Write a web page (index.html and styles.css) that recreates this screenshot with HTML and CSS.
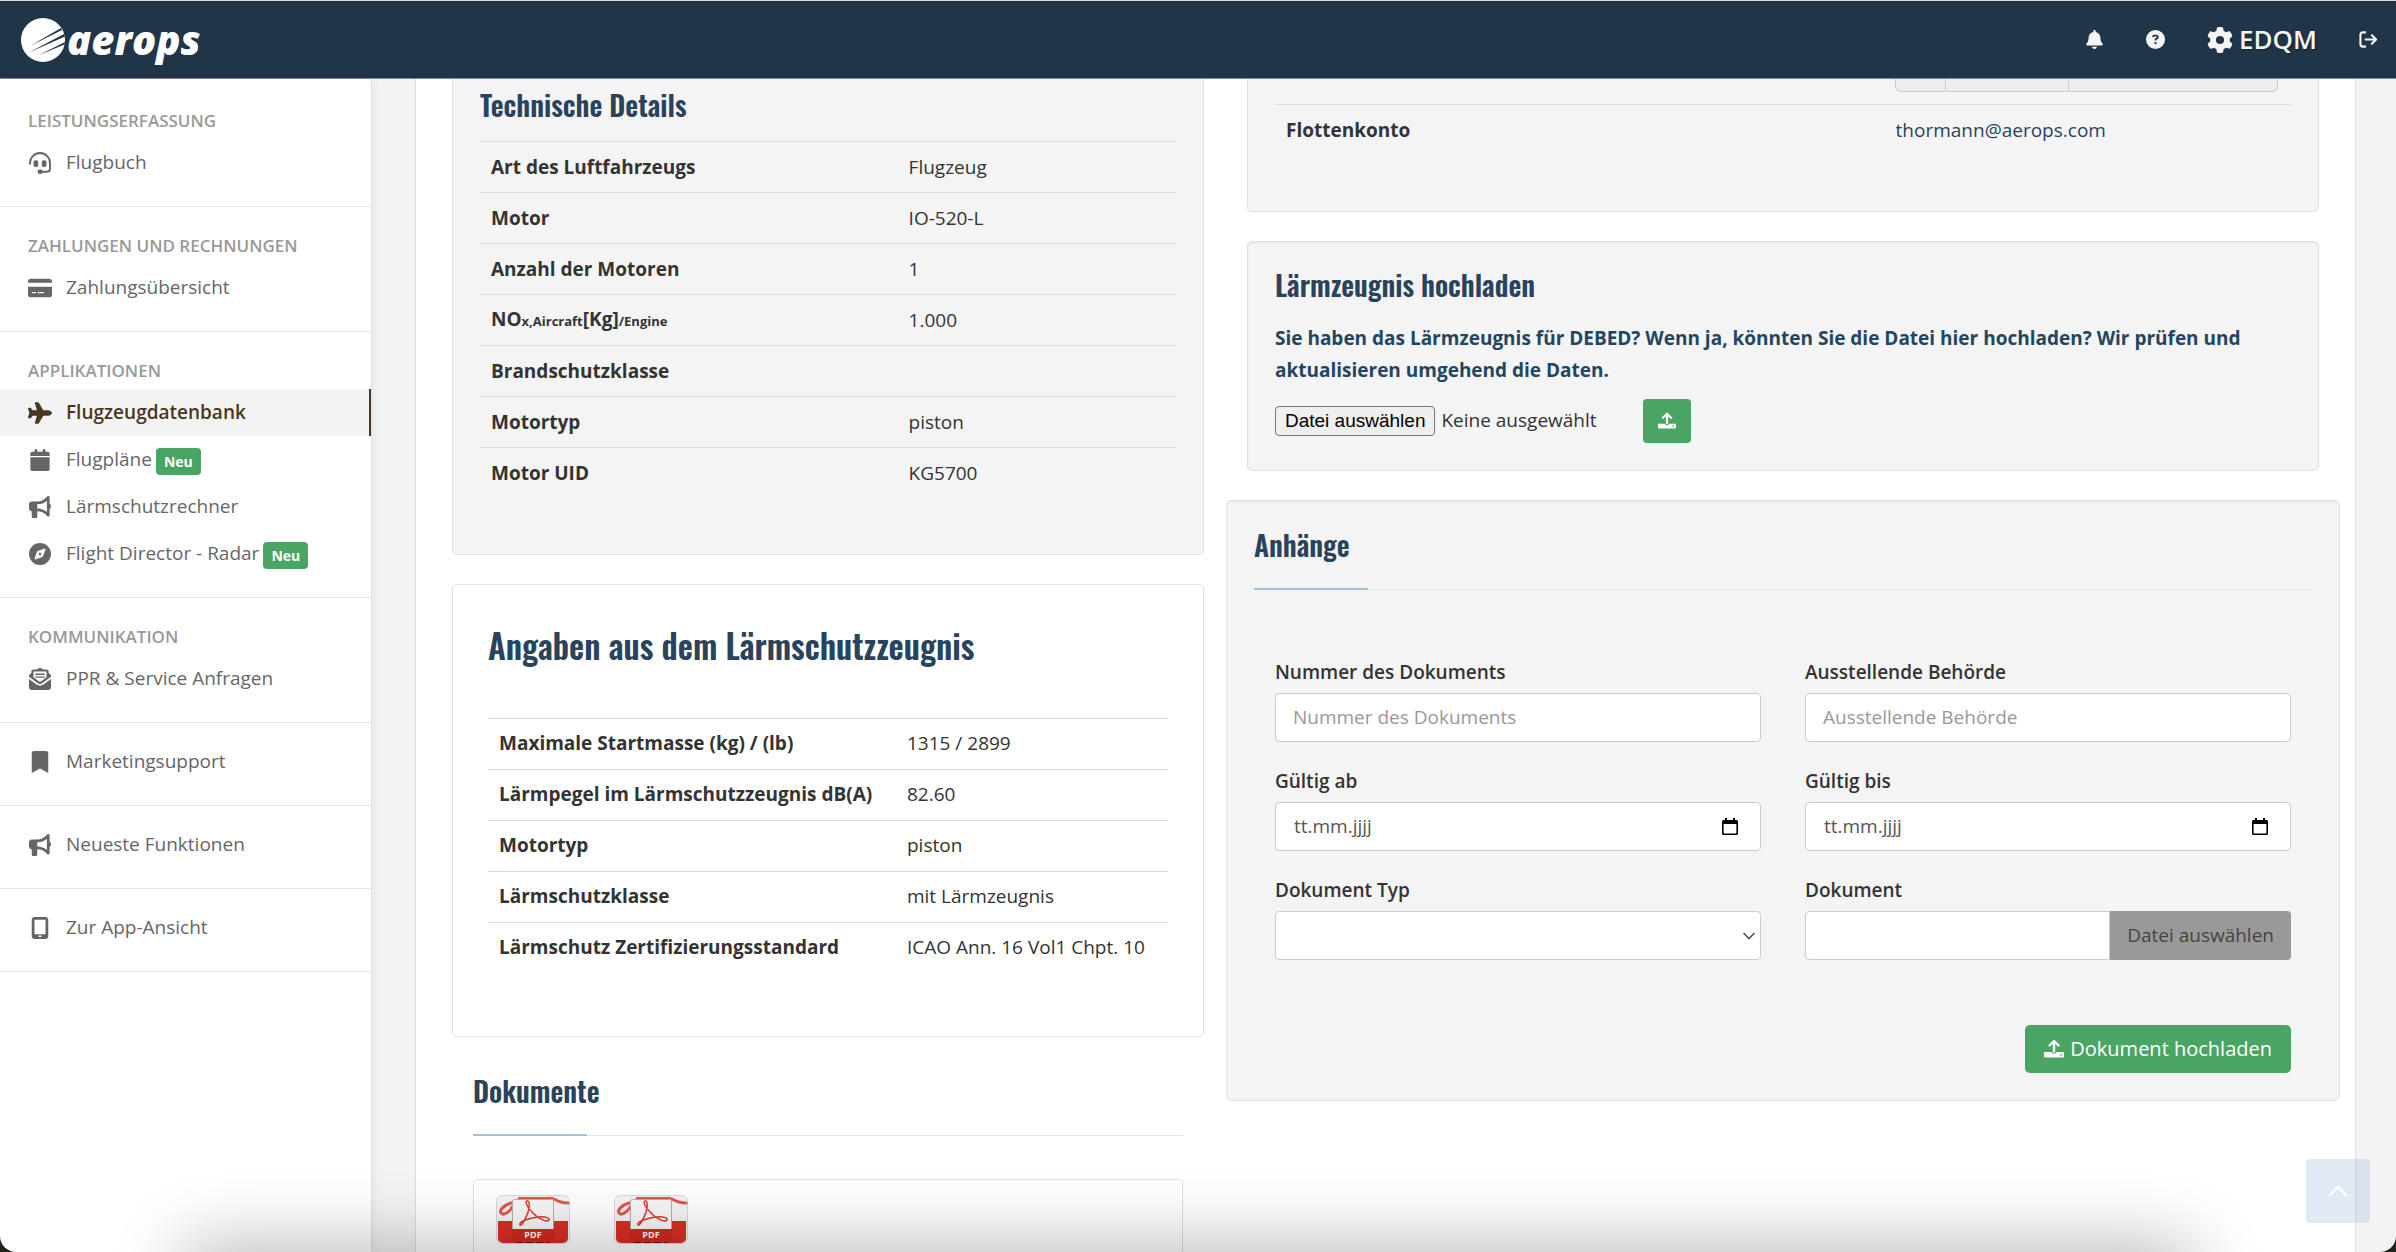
FILE: index.html
```html
<!DOCTYPE html>
<html lang="de">
<head>
<meta charset="utf-8">
<meta name="viewport" content="width=device-width, initial-scale=1">
<title>aerops – Flugzeugdatenbank</title>
<link rel="stylesheet" href="styles.css">
</head>
<body>
<svg class="sprite" aria-hidden="true">
  <symbol id="i-headset" viewBox="0 0 512 512"><path d="M24 272v-24C24 128 128 24 256 24s232 104 232 224v140c0 44-30 72-72 72H290" fill="none" stroke="currentColor" stroke-width="44" stroke-linecap="round"/><rect x="106" y="190" width="108" height="158" rx="42"/><rect x="298" y="190" width="108" height="158" rx="42"/><rect x="200" y="410" width="120" height="100" rx="48"/></symbol>
  <symbol id="i-card" viewBox="0 0 576 512"><path d="M64 32C28.700 32 0 60.700 0 96v32h576V96c0-35.300-28.700-64-64-64H64zm512 192H0v192c0 35.300 28.700 64 64 64h448c35.300 0 64-28.700 64-64V224zM112 352h64c8.800 0 16 7.200 16 16s-7.200 16-16 16h-64c-8.800 0-16-7.200-16-16s7.200-16 16-16zm112 16c0-8.800 7.200-16 16-16h128c8.800 0 16 7.200 16 16s-7.200 16-16 16H240c-8.800 0-16-7.200-16-16z"/></symbol>
  <symbol id="i-plane" viewBox="0 0 576 512"><path d="M482.300 192c34.200 0 93.700 29 93.700 64c0 36-59.500 64-93.700 64l-116.600 0L265.200 495.900c-5.700 10-16.300 16.100-27.800 16.100l-56.200 0c-10.600 0-18.300-10.200-15.400-20.400l49-171.600L112 320 68.800 377.600c-3 4-7.800 6.400-12.800 6.400l-42 0c-7.800 0-14-6.300-14-14c0-1.300 .2-2.600 .5-3.900L32 256 .5 145.900c-.4-1.300-.5-2.600-.5-3.900c0-7.800 6.300-14 14-14l42 0c5 0 9.800 2.400 12.800 6.400L112 192l102.900 0-49-171.600C162.900 10.200 170.600 0 181.200 0l56.200 0c11.500 0 22.100 6.200 27.800 16.100L365.700 192l116.600 0z"/></symbol>
  <symbol id="i-calendar" viewBox="0 0 448 512"><path d="M96 32V64H48C21.500 64 0 85.500 0 112v48H448V112c0-26.500-21.500-48-48-48H352V32c0-17.700-14.300-32-32-32s-32 14.300-32 32V64H160V32c0-17.700-14.300-32-32-32S96 14.300 96 32zM448 192H0V464c0 26.500 21.500 48 48 48H400c26.500 0 48-21.500 48-48V192z"/></symbol>
  <symbol id="i-horn" viewBox="0 0 512 512"><path d="M480 32c0-12.900-7.800-24.600-19.800-29.600s-25.700-2.200-34.900 6.900L381.700 53c-48 48-113.100 75-181 75H192 160 64c-35.300 0-64 28.700-64 64v96c0 35.300 28.700 64 64 64l0 128c0 17.700 14.300 32 32 32h64c17.700 0 32-14.300 32-32V352l8.700 0c67.900 0 133 27 181 75l43.600 43.600c9.200 9.200 22.900 11.900 34.900 6.900s19.800-16.600 19.800-29.600V300.400c18.600-8.800 32-32.500 32-60.400s-13.400-51.600-32-60.400V32zm-64 76.700V240 371.300C357.200 317.800 280.500 288 200.700 288H192V192h8.700c79.800 0 156.500-29.800 215.300-83.300z"/></symbol>
  <symbol id="i-compass" viewBox="0 0 512 512"><path d="M256 512A256 256 0 1 0 256 0a256 256 0 1 0 0 512zm50.700-186.900L162.400 380.600c-19.400 7.500-38.500-11.600-31-31l55.500-144.300c3.300-8.500 9.900-15.100 18.400-18.400l144.300-55.500c19.400-7.500 38.500 11.600 31 31L325.100 306.700c-3.200 8.500-9.900 15.100-18.400 18.400zM288 256a32 32 0 1 0 -64 0 32 32 0 1 0 64 0z"/></symbol>
  <symbol id="i-mail" viewBox="0 0 512 512"><path d="M256 0c-22 0-43 7-61 20L171 36H96C74 36 56 54 56 76v42L20 144C8 153 0 168 0 184v22l196 145c36 26 84 26 120 0l196-145v-22c0-16-8-31-20-40l-36-26V76c0-22-18-40-40-40h-75l-24-16C299 7 278 0 256 0zM104 84h304v134L286 308c-18 13-42 13-60 0L104 218zM160 130c-22 0-22 32 0 32h192c22 0 22-32 0-32zm0 66c-22 0-22 32 0 32h192c22 0 22-32 0-32zM0 256v192c0 35 29 64 64 64h384c35 0 64-29 64-64V256L344 380c-52 38-124 38-176 0z" fill-rule="evenodd"/></symbol>
  <symbol id="i-bookmark" viewBox="0 0 384 512"><path d="M0 512V48C0 21 21 0 48 0h288c27 0 48 21 48 48v464L192 408z"/></symbol>
  <symbol id="i-tablet" viewBox="0 0 384 512"><path d="M64 0C29 0 0 29 0 64v384c0 35 29 64 64 64h256c35 0 64-29 64-64V64c0-35-29-64-64-64zM64 64h256v336H64zM160 432h64v32h-64z" fill-rule="evenodd"/></symbol>
  <symbol id="i-bell" viewBox="0 0 448 512"><path d="M224 0c-17.700 0-32 14.300-32 32V51.200C119 66 64 130.600 64 208v18.800c0 47-17.300 92.400-48.500 127.600l-7.400 8.300c-8.400 9.400-10.400 22.900-5.300 34.400S19.400 416 32 416H416c12.600 0 24-7.400 29.200-18.900s3.100-25-5.300-34.400l-7.400-8.300C401.300 319.200 384 273.900 384 226.800V208c0-77.400-55-142-128-156.800V32c0-17.700-14.300-32-32-32zm45.300 493.300c12-12 18.700-28.300 18.700-45.300H224 160c0 17 6.700 33.300 18.700 45.300s28.300 18.700 45.300 18.700s33.300-6.700 45.300-18.700z"/></symbol>
  <symbol id="i-help" viewBox="0 0 512 512"><path d="M256 512A256 256 0 1 0 256 0a256 256 0 1 0 0 512zM169.800 165.300c7.900-22.300 29.100-37.300 52.800-37.300h58.300c34.900 0 63.100 28.300 63.100 63.100c0 22.600-12.100 43.500-31.700 54.800L280 264.400c-.2 13-10.900 23.600-24 23.600c-13.300 0-24-10.700-24-24V250.500c0-8.600 4.600-16.500 12.100-20.800l44.300-25.400c4.700-2.700 7.600-7.700 7.600-13.100c0-8.400-6.800-15.100-15.100-15.100H222.600c-3.400 0-6.400 2.100-7.500 5.300l-.4 1.200c-4.400 12.500-18.200 19-30.600 14.600s-19-18.200-14.600-30.600l.4-1.200zM224 352a32 32 0 1 1 64 0 32 32 0 1 1 -64 0z"/></symbol>
  <symbol id="i-gear" viewBox="0 0 512 512"><path d="M495.900 166.600c3.200 8.700 .5 18.400-6.400 24.600l-43.300 39.400c1.100 8.300 1.700 16.800 1.700 25.400s-.6 17.100-1.700 25.400l43.300 39.400c6.900 6.200 9.600 15.900 6.400 24.600c-4.400 11.900-9.700 23.300-15.800 34.300l-4.700 8.100c-6.600 11-14 21.400-22.100 31.200c-5.900 7.200-15.700 9.600-24.500 6.800l-55.700-17.700c-13.400 10.300-28.200 18.900-44 25.400l-12.500 57.100c-2 9.100-9 16.300-18.200 17.800c-13.800 2.300-28 3.500-42.500 3.500s-28.700-1.200-42.500-3.500c-9.200-1.500-16.200-8.700-18.200-17.800l-12.500-57.100c-15.800-6.500-30.600-15.100-44-25.400L83.100 425.900c-8.800 2.800-18.600 .3-24.500-6.800c-8.100-9.800-15.500-20.200-22.100-31.200l-4.700-8.100c-6.100-11-11.400-22.400-15.800-34.300c-3.200-8.700-.5-18.400 6.400-24.600l43.300-39.400C64.600 273.100 64 264.600 64 256s.6-17.100 1.700-25.400L22.400 191.200c-6.900-6.200-9.600-15.900-6.400-24.600c4.400-11.900 9.700-23.300 15.800-34.300l4.700-8.100c6.600-11 14-21.400 22.100-31.200c5.900-7.200 15.700-9.600 24.500-6.800l55.700 17.700c13.400-10.300 28.200-18.900 44-25.400l12.500-57.100c2-9.100 9-16.300 18.200-17.800C227.300 1.200 241.500 0 256 0s28.700 1.200 42.500 3.500c9.200 1.500 16.200 8.700 18.200 17.800l12.500 57.100c15.800 6.500 30.600 15.100 44 25.400l55.700-17.700c8.800-2.800 18.600-.3 24.500 6.800c8.100 9.800 15.500 20.200 22.100 31.200l4.700 8.100c6.100 11 11.400 22.400 15.800 34.300zM256 336a80 80 0 1 0 0-160 80 80 0 1 0 0 160z"/></symbol>
  <symbol id="i-logout" viewBox="0 0 20 18"><path d="M6.500 1.500H4A2.500 2.500 0 0 0 1.500 4v10A2.500 2.500 0 0 0 4 16.500h2.500M7 9h11M13.500 4.500 18 9l-4.500 4.500" fill="none" stroke="currentColor" stroke-width="2.200" stroke-linecap="round" stroke-linejoin="round"/></symbol>
  <symbol id="i-upload" viewBox="0 0 20 18"><path d="M10 12V2M5.500 6 10 1.500 14.500 6" fill="none" stroke="currentColor" stroke-width="2.400" stroke-linecap="round" stroke-linejoin="round"/><path d="M1.500 12.500H7.700a2.400 2.400 0 0 0 4.600 0h6.200A1.300 1.300 0 0 1 20 13.800v2.700A1.400 1.400 0 0 1 18.500 18h-17A1.400 1.400 0 0 1 0 16.500v-2.700A1.300 1.300 0 0 1 1.500 12.500zM17 14.400a.9.900 0 1 0 0 1.800.9.900 0 0 0 0-1.800z" fill-rule="evenodd"/></symbol>
  <symbol id="i-date" viewBox="0 0 16 17"><path d="M3 0h2v2h6V0h2v2h1.500A1.500 1.500 0 0 1 16 3.500v12a1.500 1.500 0 0 1-1.500 1.500h-13A1.500 1.500 0 0 1 0 15.500v-12A1.500 1.500 0 0 1 1.500 2H3zM1.600 6v9.400h12.800V6z" fill-rule="evenodd"/></symbol>
  <symbol id="i-pdf" viewBox="0 0 74 49">
    <rect x=".5" y=".5" width="73" height="48" rx="6" fill="#f4f4f4" stroke="#d8d8d8"/>
    <path d="M2 26h70v17a5 5 0 0 1-5 5H7a5 5 0 0 1-5-5z" fill="#d92f23"/>
    <path d="M15 8C8 10 3 15 5 18s9-1 11-6M58 4c5 3 9 4 14 4" fill="none" stroke="#e2574d" stroke-width="3" stroke-linecap="round"/>
    <path d="M22 3h35" stroke="#e2574d" stroke-width="2"/>
    <path d="M20 47h34" stroke="#611" stroke-width="2" stroke-dasharray="7 3"/>
    <rect x="16.500" y="4.500" width="41" height="42" rx="2" fill="#f7f7f7" stroke="#b9a9a7"/>
    <path d="M16 34h42v11a2 2 0 0 1-2 2H18a2 2 0 0 1-2-2z" fill="#d0291d"/>
    <path d="M24 30c-2-3 9-7 18-8 7-1 12 1 11 3-2 3-12-2-17-8-5-5-7-10-5-11 4-1 2 11-1 16-2 5-5 9-6 8z" fill="none" stroke="#e03a2e" stroke-width="1.500"/>
  </symbol>
</svg>

<header class="topbar">
  <a class="brand" href="#" aria-label="aerops">
    <svg class="brand-mark" viewBox="0 0 44 44" aria-hidden="true"><circle cx="22" cy="22" r="22" fill="#fff"/><path d="M9 28 40 10l1 2zM8 34.500 43 16l1 2.600zM17 37.500 44 24l-.5 2.500z" fill="#213549"/></svg>
    <span class="brand-name">aerops</span>
  </a>
  <nav class="topnav" aria-label="Konto">
    <a href="#" aria-label="Benachrichtigungen"><svg class="nav-icon"><use href="#i-bell"/></svg></a>
    <a href="#" aria-label="Hilfe"><svg class="nav-icon"><use href="#i-help"/></svg></a>
    <a class="station" href="#"><svg class="gear-icon"><use href="#i-gear"/></svg>EDQM</a>
    <a href="#" aria-label="Abmelden"><svg class="nav-icon"><use href="#i-logout"/></svg></a>
  </nav>
</header>

<div class="shell">
  <aside class="sidebar">
    <section class="side-group">
      <h2 class="side-title">Leistungserfassung</h2>
      <a class="side-link" href="#"><svg class="side-icon"><use href="#i-headset"/></svg>Flugbuch</a>
    </section>
    <section class="side-group">
      <h2 class="side-title">Zahlungen und Rechnungen</h2>
      <a class="side-link" href="#"><svg class="side-icon"><use href="#i-card"/></svg>Zahlungsübersicht</a>
    </section>
    <section class="side-group">
      <h2 class="side-title">Applikationen</h2>
      <a class="side-link is-active" href="#" aria-current="page"><svg class="side-icon"><use href="#i-plane"/></svg>Flugzeugdatenbank</a>
      <a class="side-link" href="#"><svg class="side-icon"><use href="#i-calendar"/></svg>Flugpläne<span class="badge">Neu</span></a>
      <a class="side-link" href="#"><svg class="side-icon"><use href="#i-horn"/></svg>Lärmschutzrechner</a>
      <a class="side-link" href="#"><svg class="side-icon"><use href="#i-compass"/></svg>Flight Director - Radar<span class="badge">Neu</span></a>
    </section>
    <section class="side-group">
      <h2 class="side-title">Kommunikation</h2>
      <a class="side-link" href="#"><svg class="side-icon"><use href="#i-mail"/></svg>PPR &amp; Service Anfragen</a>
    </section>
    <div class="side-group"><a class="side-link" href="#"><svg class="side-icon"><use href="#i-bookmark"/></svg>Marketingsupport</a></div>
    <div class="side-group"><a class="side-link" href="#"><svg class="side-icon"><use href="#i-horn"/></svg>Neueste Funktionen</a></div>
    <div class="side-group"><a class="side-link" href="#"><svg class="side-icon"><use href="#i-tablet"/></svg>Zur App-Ansicht</a></div>
  </aside>

  <main class="main">
    <div class="page">
      <div class="col">
        <section class="card card-open">
          <h2 class="title title-tech">Technische Details</h2>
          <table class="facts">
            <tr><th scope="row">Art des Luftfahrzeugs</th><td>Flugzeug</td></tr>
            <tr><th scope="row">Motor</th><td>IO-520-L</td></tr>
            <tr><th scope="row">Anzahl der Motoren</th><td>1</td></tr>
            <tr><th scope="row">NO<small>x,Aircraft</small>[Kg]<small>/Engine</small></th><td>1.000</td></tr>
            <tr><th scope="row">Brandschutzklasse</th><td></td></tr>
            <tr><th scope="row">Motortyp</th><td>piston</td></tr>
            <tr><th scope="row">Motor UID</th><td>KG5700</td></tr>
          </table>
        </section>
        <section class="card card-plain">
          <h2 class="title title-large">Angaben aus dem Lärmschutzzeugnis</h2>
          <table class="facts">
            <tr><th scope="row">Maximale Startmasse (kg) / (lb)</th><td>1315 / 2899</td></tr>
            <tr><th scope="row">Lärmpegel im Lärmschutzzeugnis dB(A)</th><td>82.60</td></tr>
            <tr><th scope="row">Motortyp</th><td>piston</td></tr>
            <tr><th scope="row">Lärmschutzklasse</th><td>mit Lärmzeugnis</td></tr>
            <tr><th scope="row">Lärmschutz Zertifizierungsstandard</th><td>ICAO Ann. 16 Vol1 Chpt. 10</td></tr>
          </table>
        </section>
        <section class="documents">
          <h2 class="title title-ruled">Dokumente</h2>
          <div class="files">
            <a href="#" aria-label="PDF-Dokument 1"><svg class="pdf" viewBox="0 0 74 49"><use href="#i-pdf"/><text x="37" y="43" text-anchor="middle" class="pdf-text">PDF</text></svg></a>
            <a href="#" aria-label="PDF-Dokument 2"><svg class="pdf" viewBox="0 0 74 49"><use href="#i-pdf"/><text x="37" y="43" text-anchor="middle" class="pdf-text">PDF</text></svg></a>
          </div>
        </section>
      </div>

      <div class="col">
        <section class="card card-open inset">
          <div class="actions">
            <button type="button" class="act act-s" aria-label="Anzeigen"></button>
            <button type="button" class="act act-m" aria-label="Bearbeiten"></button>
            <button type="button" class="act act-l" aria-label="Verwalten"></button>
          </div>
          <table class="facts">
            <tr><th scope="row">Flottenkonto</th><td><a class="mail" href="mailto:thormann@aerops.com">thormann@aerops.com</a></td></tr>
          </table>
        </section>
        <section class="card inset card-upload">
          <h2 class="title">Lärmzeugnis hochladen</h2>
          <p class="note">Sie haben das Lärmzeugnis für DEBED? Wenn ja, könnten Sie die Datei hier hochladen? Wir prüfen und aktualisieren umgehend die Daten.</p>
          <form class="picker">
            <input class="file-native" type="file" id="noise-file">
            <label class="file-button" for="noise-file">Datei auswählen</label>
            <span class="file-state">Keine ausgewählt</span>
            <button type="button" class="send" aria-label="Hochladen"><svg class="send-icon"><use href="#i-upload"/></svg></button>
          </form>
        </section>
        <section class="card card-attach">
          <h2 class="title title-ruled">Anhänge</h2>
          <form class="attach">
            <div class="field"><label for="nr">Nummer des Dokuments</label><input class="control" id="nr" type="text" placeholder="Nummer des Dokuments"></div>
            <div class="field"><label for="beh">Ausstellende Behörde</label><input class="control" id="beh" type="text" placeholder="Ausstellende Behörde"></div>
            <div class="field"><label for="ab">Gültig ab</label><div class="control date"><input id="ab" type="text" inputmode="numeric" placeholder="tt.mm.jjjj"><button type="button" aria-label="Kalender öffnen"><svg class="date-icon"><use href="#i-date"/></svg></button></div></div>
            <div class="field"><label for="bis">Gültig bis</label><div class="control date"><input id="bis" type="text" inputmode="numeric" placeholder="tt.mm.jjjj"><button type="button" aria-label="Kalender öffnen"><svg class="date-icon"><use href="#i-date"/></svg></button></div></div>
            <div class="field"><label for="typ">Dokument Typ</label>
              <div class="select"><select class="control" id="typ"><option></option></select><svg class="chevron" viewBox="0 0 14 8" aria-hidden="true"><path d="M1.500 1 7 6.500 12.500 1" fill="none" stroke="#555" stroke-width="1.600"/></svg></div></div>
            <div class="field"><label for="dok">Dokument</label><div class="file-group"><input class="control" id="dok" type="text"><button type="button">Datei auswählen</button></div></div>
            <button type="button" class="submit"><svg class="submit-icon"><use href="#i-upload"/></svg>Dokument hochladen</button>
          </form>
        </section>
      </div>
    </div>
  </main>
</div>
<button type="button" class="to-top" aria-label="Nach oben"><svg class="to-top-icon" viewBox="0 0 20 12"><path d="M1.500 10.500 10 2l8.500 8.500" fill="none" stroke="#fff" stroke-width="2.400" stroke-linecap="round"/></svg></button>
<div class="frame-shade"></div>
<div class="frame-corners"></div>
</body>
</html>
```
FILE: styles.css
```css
* { box-sizing: border-box; }

body {
  margin: 0;
  height: 100vh;
  overflow: hidden;
  display: flex;
  flex-direction: column;
  background: #f3f3f3;
  color: #333;
  font: 19px/27px "Open Sans", "Noto Sans", sans-serif;
}

svg { display: block; fill: currentColor; }
.sprite { position: absolute; width: 0; height: 0; }
a { color: inherit; text-decoration: none; }
button, input, select { font: inherit; color: inherit; }
button { cursor: pointer; padding: 0; border: 0; }

/* Top bar */
.topbar {
  flex: none;
  height: 79px;
  padding: 0 18px 0 21px;
  display: flex;
  align-items: center;
  justify-content: space-between;
  background: #213549;
  border-top: 1px solid #dcdcdc;
  border-bottom: 1px solid #7f8b97;
  color: #f5f5f5;
}
.brand { display: flex; align-items: center; gap: 2px; color: #fff; }
.brand-mark { width: 44px; height: 44px; }
.brand-name { font-size: 40px; line-height: 56px; font-weight: 800; font-style: italic; }
.topnav { display: flex; align-items: center; }
.topnav a { display: flex; align-items: center; margin-left: 42px; }
.nav-icon { width: 19px; height: 19px; }
.topnav .station { gap: 6px; font-size: 26px; font-weight: 600; text-shadow: 1px 1px 2px rgba(0, 0, 0, .4); }
.gear-icon { width: 26px; height: 26px; }

.shell { flex: 1; min-height: 0; display: flex; }

/* Sidebar */
.sidebar {
  flex: none;
  width: 372px;
  padding-top: 3px;
  background: #fff;
  border-right: 1px solid #e2e2e2;
  box-shadow: 0 0 10px rgba(0, 0, 0, .08);
  color: #666;
}
.side-group { padding: 15px 0 20px; border-bottom: 1px solid #e7e7e7; }
.side-title {
  margin: 0;
  padding: 6px 0 0 28px;
  font-size: 17px;
  line-height: 36px;
  font-weight: 600;
  text-transform: uppercase;
  color: #999;
}
.side-link { display: flex; align-items: center; height: 47px; padding-left: 28px; }
.side-link.is-active {
  background: #f3f3f3;
  border-right: 2px solid #493820;
  color: #493820;
  font-weight: 600;
}
.side-icon { width: 24px; height: 22px; margin-right: 14px; }
.badge {
  margin: 4px 0 0 4px;
  padding: 0 8px;
  border-radius: 4px;
  background: #4aa564;
  color: #fff;
  font-size: 14px;
  line-height: 27px;
  font-weight: 700;
}

/* Page */
.main { flex: 1; min-width: 0; padding: 0 40px 0 43px; overflow: hidden; }
.page {
  min-height: 100%;
  display: grid;
  grid-template-columns: minmax(0, 27fr) minmax(0, 40fr);
  gap: 22px;
  padding: 0 15px 0 36px;
  background: #fff;
  border: solid #ddd;
  border-width: 0 1px;
}
.col { display: flex; flex-direction: column; gap: 29px; }
.card {
  padding: 27px;
  background: #f4f4f4;
  border: 1px solid #e1e1e1;
  border-radius: 5px;
  box-shadow: inset 0 1px 2px rgba(0, 0, 0, .06);
}
.card-open { padding-top: 0; padding-bottom: 55px; border-top: 0; border-top-left-radius: 0; border-top-right-radius: 0; box-shadow: none; }
.card-plain { padding: 35px 35px 63px; background: #fff; box-shadow: none; }
.inset { margin: 0 21px; }

.title {
  margin: 0;
  font: 600 28px/34px Oswald, "Liberation Sans Narrow", "Open Sans", sans-serif;
  color: #2a435d;
}
.title-tech { padding: 9px 0 19px; }
.title-large { font-size: 33px; line-height: 52px; padding-bottom: 46px; }
.title-ruled {
  padding-bottom: 28px;
  background:
    linear-gradient(#a6c0e0, #a6c0e0) left bottom / 114px 2px no-repeat,
    linear-gradient(#e4e4e4, #e4e4e4) left bottom / 100% 1px no-repeat;
}

.facts { width: 100%; border-collapse: collapse; table-layout: fixed; }
.facts th, .facts td {
  height: 51px;
  padding: 0 11px;
  border-top: 1px solid #ddd;
  text-align: left;
  white-space: nowrap;
}
.facts th { width: 60%; font-weight: 700; }
.facts small { font-size: 13px; }
.mail { color: #2a435d; }

.documents { margin: 0 21px; padding-top: 8px; }
.files {
  margin-top: 43px;
  height: 120px;
  padding: 15px 22px;
  display: flex;
  gap: 44px;
  border: 1px solid #ddd;
  border-radius: 5px;
}
.pdf { width: 74px; height: 49px; }
.pdf-text { font: 700 9px "Open Sans", sans-serif; fill: #fff; }

.actions { display: flex; height: 25px; margin-left: 61%; padding-bottom: 12px; }
.act { background: #ededed; border: 1px solid #ccc; border-width: 0 1px 1px 0; }
.act-s { width: 51px; border-left-width: 1px; border-bottom-left-radius: 6px; }
.act-m { width: 123px; }
.act-l { width: 209px; border-bottom-right-radius: 6px; }

.card-upload { padding-top: 26px; }
.note { margin: 20px 0 13px; line-height: 32px; font-weight: 700; color: #214662; }
.picker { display: flex; align-items: center; }
.file-native { position: absolute; width: 1px; height: 1px; opacity: 0; }
.file-button {
  padding: 0 9px;
  background: #efefef;
  border: 1px solid #767676;
  border-radius: 4px;
  color: #000;
  font: 19px/28px "Liberation Sans", Arial, sans-serif;
}
.file-state { margin: 0 46px 0 6px; }
.send { width: 48px; height: 44px; display: grid; place-items: center; border-radius: 4px; background: #4aa564; color: #fff; }
.send-icon { width: 18px; height: 17px; }

.card-attach { padding-bottom: 27px; }
.attach {
  display: grid;
  grid-template-columns: 1fr 1fr;
  gap: 22px 44px;
  padding: 65px 21px 0;
}
.field { display: flex; flex-direction: column; }
.field label { line-height: 34px; padding-bottom: 4px; font-weight: 600; }
.control {
  width: 100%;
  height: 49px;
  padding: 0 17px;
  background: #fff;
  border: 1px solid #ccc;
  border-radius: 4px;
  outline: 0;
}
.control::placeholder { color: #999; opacity: 1; }
.date { display: flex; align-items: center; padding: 0 22px 0 18px; }
.date input { flex: 1; min-width: 0; padding: 0; border: 0; outline: 0; background: none; }
.date input::placeholder { color: #555; opacity: 1; }
.date button { background: none; color: #000; }
.date-icon { width: 16px; height: 17px; }
.select { position: relative; }
.select select { appearance: none; display: block; }
.chevron { position: absolute; right: 5px; top: 21px; width: 14px; height: 8px; pointer-events: none; }
.file-group { display: flex; }
.file-group .control { flex: 1; border-radius: 4px 0 0 4px; }
.file-group button { padding: 0 17px; border-radius: 0 4px 4px 0; background: #999; color: #444; }
.submit {
  grid-column: 2;
  justify-self: end;
  height: 48px;
  margin-top: 43px;
  padding: 0 19px;
  display: flex;
  align-items: center;
  gap: 6px;
  border-radius: 5px;
  background: #4aa564;
  color: #fff;
  font-size: 20px;
}
.submit-icon { width: 20px; height: 19px; }

/* Overlays */
.to-top {
  position: fixed;
  right: 26px;
  bottom: 29px;
  width: 64px;
  height: 64px;
  display: grid;
  place-items: center;
  border-radius: 4px;
  background: rgba(166, 192, 224, .35);
}
.to-top-icon { width: 20px; height: 12px; }
.frame-shade {
  position: fixed;
  left: 190px;
  right: 210px;
  bottom: -50px;
  height: 50px;
  pointer-events: none;
  box-shadow: 0 0 70px 6px rgba(0, 0, 0, .3);
}
.frame-corners {
  position: fixed;
  inset: 0;
  pointer-events: none;
  overflow: hidden;
}
.frame-corners::after {
  content: "";
  position: absolute;
  inset: -20px 0 0;
  border-radius: 0 0 16px 16px;
  box-shadow: 0 0 0 20px #20221c;
}
```
